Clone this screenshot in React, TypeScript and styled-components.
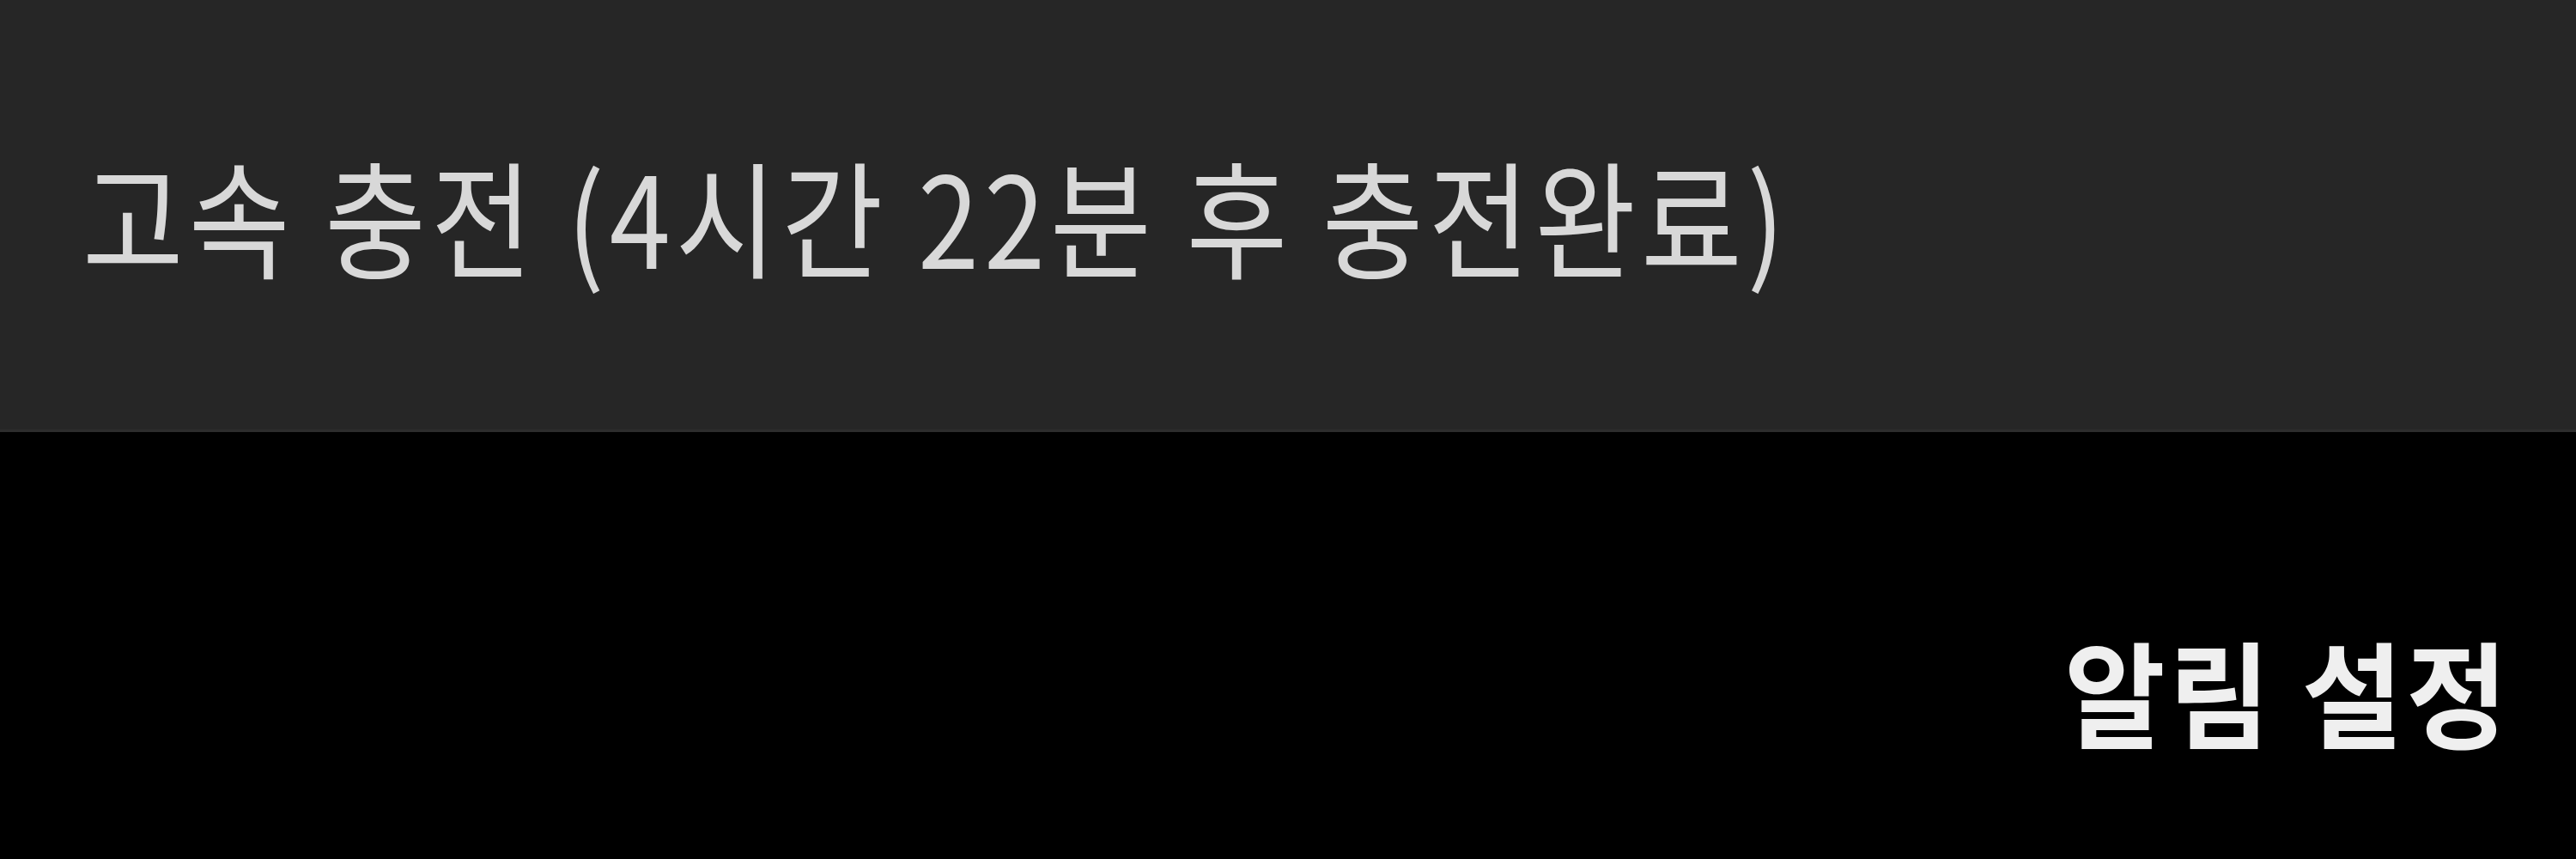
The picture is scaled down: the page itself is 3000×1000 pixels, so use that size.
import styled, { createGlobalStyle } from 'styled-components'

const GlobalStyle = createGlobalStyle`
  html, body {
    margin: 0;
    padding: 0;
    background: #000000;
  }
  body {
    font-family: 'Noto Sans CJK KR', 'Noto Sans', sans-serif;
  }
`

const Screen = styled.div`
  width: 3000px;
  height: 1000px;
  display: flex;
  flex-direction: column;
  background: #000000;
  overflow: hidden;
`

const StatusBar = styled.div`
  height: 503px;
  box-sizing: border-box;
  display: flex;
  align-items: center;
  padding: 0 0 0 96px;
  background: #262626;
  border-bottom: 3px solid #2d2d2d;
`

const Footer = styled.div`
  flex: 1;
  display: flex;
  justify-content: flex-end;
  align-items: flex-start;
  padding: 236px 76px 0 0;
`

const Label = styled.span<{ $bold?: boolean; $color: string; $spacing: number; $stretch: number }>`
  display: inline-block;
  font-size: 128px;
  line-height: 1;
  letter-spacing: ${(p) => p.$spacing}px;
  white-space: nowrap;
  color: ${(p) => p.$color};
  font-weight: ${(p) => (p.$bold ? 700 : 400)};
  transform: scaleY(${(p) => p.$stretch});
  transform-origin: center;
`

export default function App() {
  return (
    <>
      <GlobalStyle />
      <Screen>
        <StatusBar>
          <Label $color='#d8d8d8' $spacing={6} $stretch={1.15}>
            고속 충전 (4시간 22분 후 충전완료)
          </Label>
        </StatusBar>
        <Footer>
          <Label $bold $color='#efefef' $spacing={4} $stretch={1.05}>
            알림 설정
          </Label>
        </Footer>
      </Screen>
    </>
  )
}
